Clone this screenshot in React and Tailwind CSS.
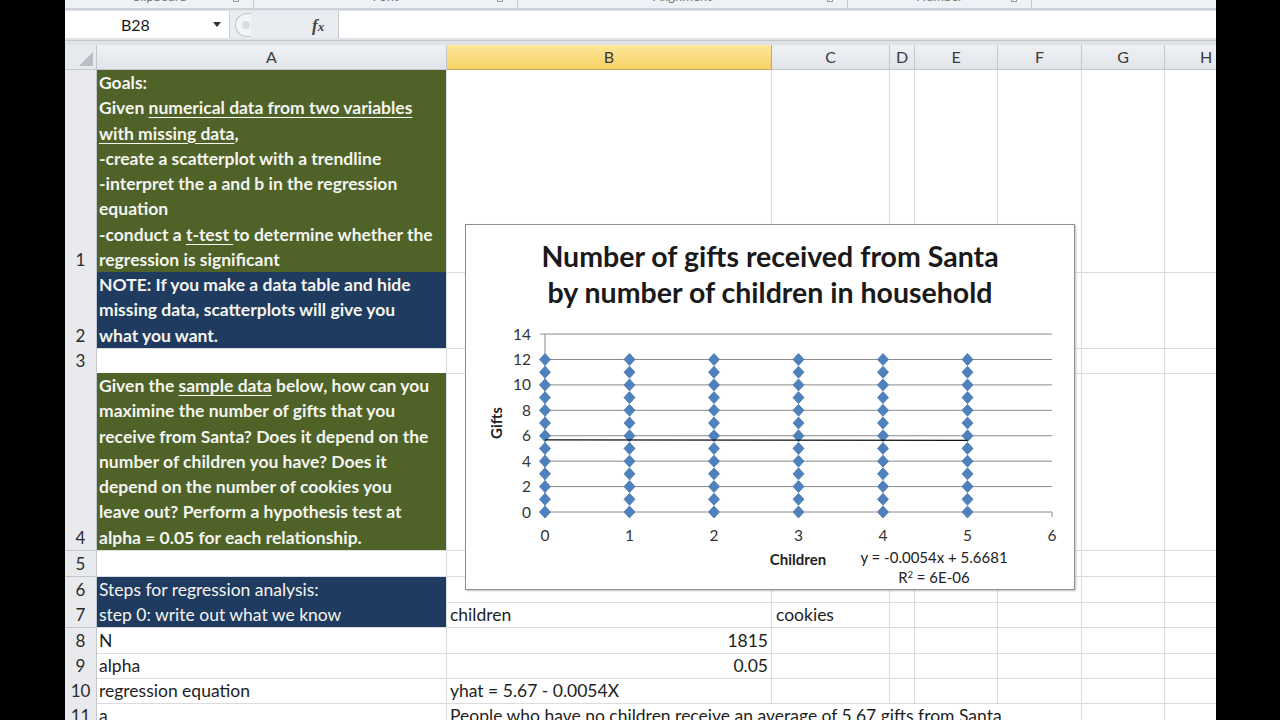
import React from "react";

const COLS =
  "grid grid-cols-[32px_350px_325px_118px_25px_83px_84px_83px_83px]";
const FONT = "font-['Lato','Open_Sans',sans-serif]";
const LETTERS = ["B", "C", "D", "E", "F", "G", "H"];

const Cell = ({ children, className = "" }) => (
  <div className={`border-r border-b border-[#dadcdf] min-w-0 ${className}`}>
    {children}
  </div>
);

const RowHead = ({ n }) => (
  <div className="flex items-end justify-center border-r border-b border-[#c4c8ce] bg-[#e8eaee] text-[17px] leading-[25px] text-[#2b2b2b]">
    {n}
  </div>
);

// blank cells from the given column letter to H
const EmptyRest = ({ from = "B" }) =>
  LETTERS.slice(LETTERS.indexOf(from)).map((c) => <Cell key={c} />);

const Lines = ({ lines, bold }) => (
  <div className={`px-[2px] text-[17.5px] leading-[25.25px] text-[#f4f4f0] ${bold ? "font-bold" : ""}`}>
    {lines.map((l, i) => (
      <div key={i} className="whitespace-nowrap">
        {l}
      </div>
    ))}
  </div>
);

const U = ({ children }) => <span className="underline underline-offset-[3px]">{children}</span>;

const Diamond = ({ cx, cy }) => (
  <polygon
    points={`${cx},${cy - 6} ${cx + 5.5},${cy} ${cx},${cy + 6} ${cx - 5.5},${cy}`}
    fill="#4f81bd"
    stroke="#4677b4"
    strokeWidth="0.8"
  />
);

const Chart = () => {
  const X0 = 79;
  const XU = 84.5;
  const Y0 = 187;
  const YU = 12.71;
  const gx = (v) => X0 + v * XU;
  const gy = (v) => Y0 - v * YU;
  const dots = [];
  for (let x = 0; x <= 5; x++) {
    for (let y = 0; y <= 12; y++) dots.push(<Diamond key={`${x}-${y}`} cx={gx(x)} cy={gy(y)} />);
  }
  return (
    <div className="absolute left-[400px] top-[179px] w-[610px] h-[366px] bg-white border border-[#8f8f8f] shadow-[1px_1px_2px_rgba(0,0,0,0.25)] flex flex-col">
      <div className="h-[100px] shrink-0 pt-[13px] text-center text-[28.5px] leading-[36px] font-bold text-[#1a1a1a] whitespace-nowrap">
        <div>Number of gifts received from Santa</div>
        <div>by number of children in household</div>
      </div>
      <svg width="608" height="264" viewBox="0 0 608 264" className="block shrink-0">
        {[0, 2, 4, 6, 8, 10, 12, 14].map((v) => (
          <g key={v}>
            <line x1={X0 - 5} x2={gx(6)} y1={gy(v)} y2={gy(v)} stroke="#8a8a8a" strokeWidth="1" />
            <text x="65" y={gy(v) + 5.5} textAnchor="end" fontSize="15.5" fill="#333">
              {v}
            </text>
          </g>
        ))}
        <line x1={X0} x2={X0} y1={gy(14)} y2={gy(0)} stroke="#8a8a8a" />
        {[0, 1, 2, 3, 4, 5, 6].map((v) => (
          <g key={v}>
            <line x1={gx(v)} x2={gx(v)} y1={Y0} y2={Y0 + 5} stroke="#8a8a8a" />
            <text x={gx(v)} y="216" textAnchor="middle" fontSize="15.5" fill="#333">
              {v}
            </text>
          </g>
        ))}
        {dots}
        <line x1={gx(0)} x2={gx(5)} y1={gy(5.6681)} y2={gy(5.6681 - 0.027)} stroke="#111" strokeWidth="1.2" />
        <text
          x="32"
          y="98"
          transform="rotate(-90 32 98)"
          textAnchor="middle"
          dominantBaseline="middle"
          fontSize="15"
          fontWeight="bold"
          fill="#222"
        >
          Gifts
        </text>
        <text x="332" y="240" textAnchor="middle" fontSize="15" fontWeight="bold" fill="#222">
          Children
        </text>
        <text x="468" y="238" textAnchor="middle" fontSize="15" fill="#222">
          y = -0.0054x + 5.6681
        </text>
        <text x="468" y="258" textAnchor="middle" fontSize="15" fill="#222">
          R<tspan baselineShift="super" fontSize="9">2</tspan> = 6E-06
        </text>
      </svg>
    </div>
  );
};

const Ribbon = () => (
  <div className="h-[10px] flex bg-[#eef1f5] border-b-[2px] border-[#cdd2d9] overflow-hidden text-[13px] leading-[16px] text-[#777]">
    {[
      ["Clipboard", "w-[189px]"],
      ["Font", "w-[264px]"],
      ["Alignment", "w-[330px]"],
      ["Number", "w-[184px]"],
    ].map(([t, w]) => (
      <div key={t} className={`${w} relative border-r border-[#c9ced6] flex justify-center`}>
        <span className="-mt-[12px]">{t}</span>
        <span className="absolute right-[14px] -top-[4px] w-[6px] h-[6px] border border-[#999]" />
      </div>
    ))}
    <div className="flex-1" />
  </div>
);

const FormulaBar = () => (
  <div className="h-[31px] flex items-stretch bg-[#dfe3e8] pt-[1px] pb-[2px] border-b border-[#c3c8cf]">
    <div className="w-[165px] bg-white flex items-center relative border-r border-[#c9ced5]">
      <span className="ml-[56px] text-[16px] text-[#1d1d1d]">B28</span>
      <svg className="absolute left-[148px] top-[11px]" width="8" height="6" viewBox="0 0 8 6">
        <path d="M0 0 L8 0 L4 5 Z" fill="#333" />
      </svg>
    </div>
    <div className="w-[108px] flex items-center bg-[#e9ecf0] relative">
      <div className="ml-[5px] w-[16px] h-[24px] rounded-l-full border border-[#c0c5cc] border-r-0 bg-[#f3f4f6] flex items-center justify-center">
        <span className="ml-[4px] w-[8px] h-[8px] rounded-full bg-[#d8dbe0]" />
      </div>
      <span className="absolute left-[82px] top-[2px] font-['Liberation_Serif',serif] italic font-bold text-[17px] text-[#444]">
        f<span className="text-[13px]">x</span>
      </span>
    </div>
    <div className="flex-1 bg-white border-l border-[#c3c8cf]" />
  </div>
);

export default function App() {
  return (
    <div className={`w-[1280px] h-[720px] bg-black overflow-hidden flex ${FONT}`}>
      <div className="w-[65px] shrink-0" />
      <div className="w-[1151px] h-[720px] shrink-0 bg-white overflow-hidden">
        <Ribbon />
        <FormulaBar />
        <div className="h-[4px] bg-[#dfe3e8]" />
        <div className="relative">
          {/* column headers */}
          <div className={`${COLS} h-[25px] text-[16px] text-[#3a3a3a]`}>
            <div className="relative bg-[#e6e9ed] border-r border-b border-[#c4c8ce]">
              <svg className="absolute right-[3px] bottom-[3px]" width="14" height="14" viewBox="0 0 14 14">
                <path d="M14 0 L14 14 L0 14 Z" fill="#b9bdc4" />
              </svg>
            </div>
            {["A", ...LETTERS].map((c) => (
              <div
                key={c}
                className={`flex items-center justify-center border-r border-b ${
                  c === "B"
                    ? "bg-gradient-to-b from-[#fde79a] to-[#f8d262] border-[#c2a866]"
                    : "bg-gradient-to-b from-[#eff1f4] to-[#e1e5ea] border-[#c4c8ce]"
                }`}
              >
                {c}
              </div>
            ))}
          </div>

          {/* row 1 */}
          <div className={`${COLS} h-[202px]`}>
            <RowHead n={1} />
            <Cell className="bg-[#4f6228] border-[#4f6228]">
              <Lines
                bold
                lines={[
                  "Goals:",
                  <>
                    Given <U>numerical data from two variables </U>
                  </>,
                  <>
                    <U>with missing data</U>,
                  </>,
                  "-create a scatterplot with a trendline",
                  "-interpret the a and b in the regression",
                  "equation",
                  <>
                    -conduct a <U>t-test </U>to determine whether the
                  </>,
                  "regression is significant",
                ]}
              />
            </Cell>
            <EmptyRest />
          </div>

          {/* row 2 */}
          <div className={`${COLS} h-[76px]`}>
            <RowHead n={2} />
            <Cell className="bg-[#1f3b5f] border-[#1f3b5f]">
              <Lines
                bold
                lines={[
                  "NOTE: If you make a data table and hide",
                  "missing data, scatterplots will give you",
                  "what you want.",
                ]}
              />
            </Cell>
            <EmptyRest />
          </div>

          {/* row 3 */}
          <div className={`${COLS} h-[25px]`}>
            <RowHead n={3} />
            <Cell />
            <EmptyRest />
          </div>

          {/* row 4 */}
          <div className={`${COLS} h-[178px]`}>
            <RowHead n={4} />
            <Cell className="bg-[#4f6228] border-[#4f6228]">
              <Lines
                bold
                lines={[
                  <>
                    Given the <U>sample data</U> below, how can you
                  </>,
                  "maximine the number of gifts that you",
                  "receive from Santa? Does it depend on the",
                  "number of children you have? Does it",
                  "depend on the number of cookies you",
                  "leave out? Perform a hypothesis test at",
                  "alpha = 0.05 for each relationship.",
                ]}
              />
            </Cell>
            <EmptyRest />
          </div>

          {/* row 5 */}
          <div className={`${COLS} h-[26px]`}>
            <RowHead n={5} />
            <Cell />
            <EmptyRest />
          </div>

          {/* row 6 */}
          <div className={`${COLS} h-[25px]`}>
            <RowHead n={6} />
            <Cell className="bg-[#1f3b5f] border-[#1f3b5f]">
              <Lines lines={["Steps for regression analysis:"]} />
            </Cell>
            <EmptyRest />
          </div>

          {/* row 7 */}
          <div className={`${COLS} h-[26px] text-[17.5px] leading-[25px] text-[#1e1e1e]`}>
            <RowHead n={7} />
            <Cell className="bg-[#1f3b5f] border-[#1f3b5f]">
              <Lines lines={["step 0: write out what we know"]} />
            </Cell>
            <Cell className="px-[3px]">children</Cell>
            <Cell className="px-[4px]">cookies</Cell>
            <EmptyRest from="D" />
          </div>

          {/* rows 8-10 */}
          {[
            [8, "N", "1815", true],
            [9, "alpha", "0.05", true],
            [10, "regression equation", "yhat = 5.67 - 0.0054X", false],
          ].map(([n, a, b, right]) => (
            <div key={n} className={`${COLS} h-[25px] text-[17.5px] leading-[25px] text-[#1e1e1e]`}>
              <RowHead n={n} />
              <Cell className="px-[2px]">{a}</Cell>
              <Cell className={`px-[3px] ${right ? "text-right" : ""}`}>{b}</Cell>
              <EmptyRest from="C" />
            </div>
          ))}

          {/* row 11 */}
          <div className={`${COLS} h-[26px] text-[17.5px] leading-[25px] text-[#1e1e1e]`}>
            <RowHead n={11} />
            <Cell className="px-[2px]">a</Cell>
            <Cell className="col-span-5 px-[3px] whitespace-nowrap">
              People who have no children receive an average of 5.67 gifts from Santa
            </Cell>
            <EmptyRest from="G" />
          </div>

          <Chart />
        </div>
      </div>
      <div className="flex-1" />
    </div>
  );
}
